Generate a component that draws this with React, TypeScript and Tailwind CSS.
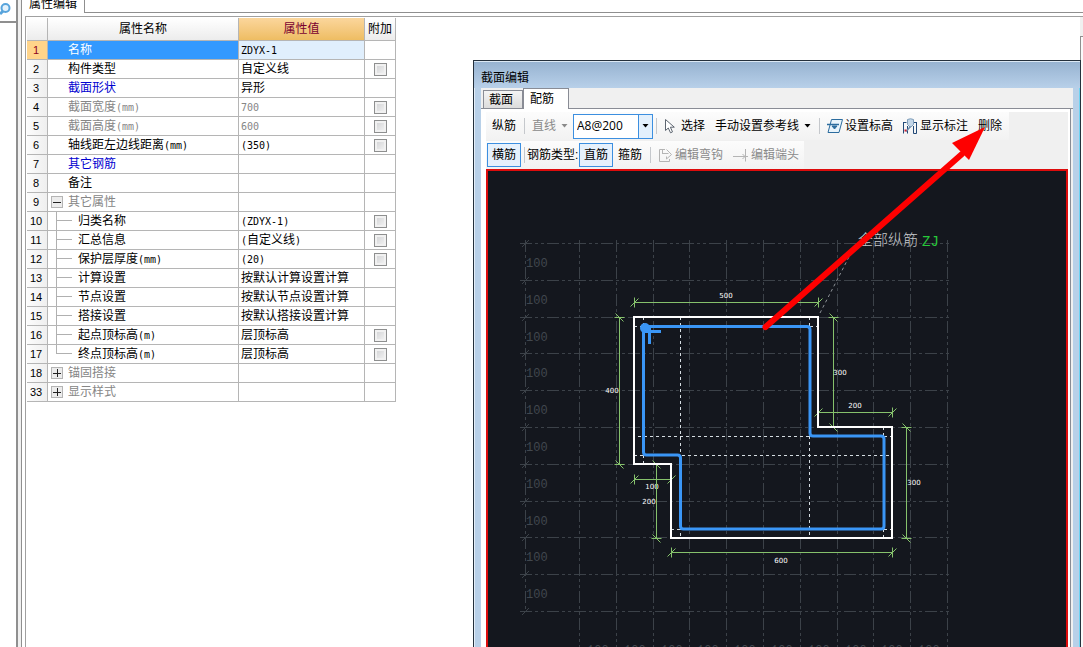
import React from 'react';

type Tone = 'normal' | 'link' | 'muted';

interface PropertyRow {
    no: number;
    name: string;
    value?: string;
    tone?: Tone;
    valueMuted?: boolean;
    checkable?: boolean;
    kind?: 'group-open' | 'group-closed' | 'child' | 'last-child';
}

const rows: PropertyRow[] = [
    { no: 1, name: '名称', value: 'ZDYX-1' },
    { no: 2, name: '构件类型', value: '自定义线', checkable: true },
    { no: 3, name: '截面形状', value: '异形', tone: 'link' },
    { no: 4, name: '截面宽度(mm)', value: '700', tone: 'muted', valueMuted: true, checkable: true },
    { no: 5, name: '截面高度(mm)', value: '600', tone: 'muted', valueMuted: true, checkable: true },
    { no: 6, name: '轴线距左边线距离(mm)', value: '(350)', checkable: true },
    { no: 7, name: '其它钢筋', tone: 'link' },
    { no: 8, name: '备注' },
    { no: 9, name: '其它属性', tone: 'muted', kind: 'group-open' },
    { no: 10, name: '归类名称', value: '(ZDYX-1)', checkable: true, kind: 'child' },
    { no: 11, name: '汇总信息', value: '(自定义线)', checkable: true, kind: 'child' },
    { no: 12, name: '保护层厚度(mm)', value: '(20)', checkable: true, kind: 'child' },
    { no: 13, name: '计算设置', value: '按默认计算设置计算', kind: 'child' },
    { no: 14, name: '节点设置', value: '按默认节点设置计算', kind: 'child' },
    { no: 15, name: '搭接设置', value: '按默认搭接设置计算', kind: 'child' },
    { no: 16, name: '起点顶标高(m)', value: '层顶标高', checkable: true, kind: 'child' },
    { no: 17, name: '终点顶标高(m)', value: '层顶标高', checkable: true, kind: 'last-child' },
    { no: 18, name: '锚固搭接', tone: 'muted', kind: 'group-closed' },
    { no: 33, name: '显示样式', tone: 'muted', kind: 'group-closed' },
];

const toneClass: Record<Tone, string> = {
    normal: 'text-black',
    link: 'text-[#0000d0]',
    muted: 'text-[#868686]',
};

// Latin runs use a narrow monospace face, Chinese runs keep the page font
const Mixed: React.FC<{ text: string }> = ({ text }) => (
    <span className="whitespace-nowrap">
        {text.split(/([\x20-\x7e]+)/).map((part, i) =>
            i % 2 ? <span key={i} className="font-['DejaVu_Sans_Mono',monospace] text-[10px]">{part}</span> : part
        )}
    </span>
);

const TreeMark: React.FC<{ row: PropertyRow }> = ({ row }) => {
    if (row.kind === 'group-open' || row.kind === 'group-closed') {
        return (
            <button aria-label={row.name} className="ml-[3px] mr-[5px] flex size-3 items-center justify-center border border-[#b4b4b4] bg-[#ececec]">
                <svg width="8" height="8" shapeRendering="crispEdges" stroke="#222">
                    <path d={row.kind === 'group-open' ? 'M0 4.5h8' : 'M0 4.5h8M4.5 0v8'} fill="none" />
                </svg>
            </button>
        );
    }
    if (row.kind) {
        return (
            <span className="ml-2 mr-1.5 flex h-[18px] w-4 flex-col">
                <span className="h-[9px] border-b border-l border-[#b0b0b0]" />
                <span className={row.kind === 'child' ? 'h-[9px] border-l border-[#b0b0b0]' : 'h-[9px]'} />
            </span>
        );
    }
    return <span className="w-5" />;
};

const PropertyTable: React.FC = () => (
    <table className="table-fixed border-separate border-spacing-0 text-xs leading-[18px]">
        <colgroup>
            <col className="w-[21px]" />
            <col className="w-[191px]" />
            <col className="w-[126px]" />
            <col className="w-[31px]" />
        </colgroup>
        <thead>
            <tr className="h-[23px]">
                <th className="border-b border-r border-[#b5b5b5] bg-linear-to-b from-white to-[#ececec] p-0"></th>
                <th className="border-b border-r border-[#b5b5b5] bg-linear-to-b from-white to-[#ececec] p-0 font-normal">属性名称</th>
                <th className="border-b border-r border-[#b5b5b5] bg-linear-to-b from-[#fbd69c] to-[#eebd62] p-0 font-normal text-[#7a0030]">属性值</th>
                <th className="border-b border-r border-[#b5b5b5] bg-linear-to-b from-white to-[#ececec] p-0 font-normal">附加</th>
            </tr>
        </thead>
        <tbody>
            {rows.map((row) => {
                const selected = row.no === 1;
                return (
                    <tr key={row.no} className="h-[19px]">
                        <th className={`border-b border-r border-[#b5b5b5] p-0 pr-[2px] font-['Liberation_Sans',sans-serif] text-[11px] font-normal ${selected ? 'bg-[#ffd48a] text-[#8b0020]' : 'bg-linear-to-r from-[#fcfcfc] to-[#efefef]'}`}>
                            {row.no}
                        </th>
                        <td className={`border-b border-r border-[#b5b5b5] p-0 ${selected ? 'bg-[#3399ff] text-white' : toneClass[row.tone ?? 'normal']}`}>
                            <div className="flex h-[18px] items-center">
                                <TreeMark row={row} />
                                <Mixed text={row.name} />
                            </div>
                        </td>
                        <td className={`border-b border-r border-[#b5b5b5] p-0 pl-[2px] ${selected ? 'bg-[#e0effd]' : ''} ${row.valueMuted ? 'text-[#868686]' : ''}`}>
                            <div className="flex h-[18px] items-center">
                                <Mixed text={row.value ?? ''} />
                            </div>
                        </td>
                        <td className="border-b border-r border-[#b5b5b5] p-0">
                            <div className="flex h-[18px] items-center justify-center">
                                {row.checkable && (
                                    <input
                                        type="checkbox"
                                        aria-label={`附加 ${row.name}`}
                                        className="size-[13px] appearance-none border border-[#8e8f8f] bg-linear-to-br from-[#cfd0d2] to-[#f6f6f6] ring-2 ring-inset ring-[#f1f1f1]"
                                    />
                                )}
                            </div>
                        </td>
                    </tr>
                );
            })}
        </tbody>
    </table>
);

const Separator: React.FC = () => <span className="ml-[3px] mr-[2px] h-4 w-px shrink-0 bg-[#c5c8cc]" />;

const Caret: React.FC<{ className?: string }> = ({ className }) => (
    <svg width="7" height="4" className={className} fill="currentColor">
        <path d="M.5 0h6L3.5 3.5z" />
    </svg>
);

interface ToolButtonProps {
    label: string;
    icon?: React.ReactNode;
    active?: boolean;
    disabled?: boolean;
    caret?: boolean;
}

const ToolButton: React.FC<ToolButtonProps> = ({ label, icon, active, disabled, caret }) => (
    <button
        disabled={disabled}
        className={`flex h-6 shrink-0 items-center gap-0.5 border px-1 ${active ? 'border-[#3c8fe0] bg-[#e6f1fc]' : 'border-transparent'} ${disabled ? 'text-[#8a8a8a]' : 'text-black'}`}
    >
        {icon}
        <span>{label}</span>
        {caret && <Caret className="ml-[3px]" />}
    </button>
);

const CursorIcon = () => (
    <svg width="15" height="16" viewBox="0 0 15 16" fill="#fff" stroke="#5d6570">
        <path d="M1.500 1.500v11l2.800-2.500 2.200 4.800 2-.9-2.100-4.700h3.900z" />
    </svg>
);

const LevelIcon = () => (
    <svg width="16" height="16" viewBox="0 0 16 16" fill="none" stroke="#2c6c9e">
        <path d="M4.5 1.5h11l-3.5 13h-11l3.5-13z" fill="#e9f4fb" />
        <path d="M0 6.5h12" strokeWidth="1.5" />
        <path d="M5 8h5l-2.5 3z" fill="#2c6c9e" />
    </svg>
);

const DimensionIcon = () => (
    <svg width="15" height="16" viewBox="0 0 15 16" fill="none" stroke="#234a78">
        <path d="M.5 4v11.5M4.5 8v7.5M10.5 8v7.5M13.5 4v11.5M.5 4.5h3M11 4.5h3M10.5 15.5h3" />
        <path d="M4.5 1.5q3-1.5 6 0v5l-2.5 2.5h-1L4.5 6.5z" fill="#c3d6e8" stroke="#7f9db9" />
        <path d="M7.5 8.5L3 13.5" stroke="#6c8cab" strokeWidth="1.5" />
        <path d="M1.5 11.5h2v2h-2z" fill="#d02030" stroke="none" />
    </svg>
);

const HookIcon = () => (
    <svg width="15" height="15" viewBox="0 0 15 15" fill="none" stroke="#b4b4b4">
        <path d="M7 1.5H1.5v12h10V11M4.5 1.5v3.5M4 5.5h6.5" />
        <path d="M8.5 1.5l5 5-5 4.5v-2.5" />
    </svg>
);

const EndIcon = () => (
    <svg width="16" height="15" viewBox="0 0 16 15" fill="none" stroke="#b4b4b4">
        <path d="M0 8.5h15M12.5 1v12.5" />
        <path d="M9.5 6l2.5 2.5L9.5 11" />
    </svg>
);

const Toolbars: React.FC = () => (
    <div className="flex flex-col gap-px bg-[#f0f0f0] text-xs leading-[18px]">
        <div className="flex h-7 w-fit items-center bg-linear-to-b from-[#fcfcfc] to-[#f2f2f2] pl-px pr-[2px]">
            <ToolButton label="纵筋" />
            <Separator />
            <ToolButton label="直线" disabled caret />
            <div className="relative h-[25px] w-20 shrink-0 border border-[#3c8fe0] bg-white">
                <select aria-label="钢筋规格" className="h-full w-full appearance-none pl-[3px] font-['Open_Sans',sans-serif] text-xs">
                    <option>A8@200</option>
                </select>
                <span className="pointer-events-none absolute inset-y-0 right-0 flex w-[14px] items-center justify-center border-l border-[#3c8fe0] bg-[#e3f0fc]">
                    <Caret />
                </span>
            </div>
            <Separator />
            <ToolButton label="选择" icon={<CursorIcon />} />
            <ToolButton label="手动设置参考线" caret />
            <Separator />
            <ToolButton label="设置标高" icon={<LevelIcon />} />
            <ToolButton label="显示标注" icon={<DimensionIcon />} />
            <ToolButton label="删除" />
        </div>
        <div className="flex h-7 w-fit items-center bg-linear-to-b from-[#fcfcfc] to-[#f2f2f2] pl-px">
            <ToolButton label="横筋" active />
            <Separator />
            <span className="w-[52px] shrink-0 whitespace-nowrap">钢筋类型:</span>
            <ToolButton label="直筋" active />
            <ToolButton label="箍筋" />
            <Separator />
            <ToolButton label="编辑弯钩" icon={<HookIcon />} disabled />
            <ToolButton label="编辑端头" icon={<EndIcon />} disabled />
        </div>
    </div>
);

interface Dimension {
    from: [number, number];
    to: [number, number];
    label: string;
    at: [number, number];
}

const dimensions: Dimension[] = [
    { from: [146, 131], to: [330, 131], label: '500', at: [238, 127] },
    { from: [131, 146], to: [131, 293], label: '400', at: [124, 222] },
    { from: [345, 146], to: [345, 256], label: '300', at: [352, 204] },
    { from: [330, 241], to: [404, 241], label: '200', at: [367, 237] },
    { from: [418, 256], to: [418, 367], label: '300', at: [426, 314] },
    { from: [146, 308], to: [183, 308], label: '100', at: [164, 318] },
    { from: [168, 293], to: [168, 367], label: '200', at: [161, 333] },
    { from: [183, 381], to: [404, 381], label: '600', at: [293, 392] },
];

const gridSteps = Array.from({ length: 11 }, (_, i) => Math.round(i * 36.8));

const DimensionLine: React.FC<{ dim: Dimension }> = ({ dim }) => {
    const [x1, y1] = dim.from;
    const [x2, y2] = dim.to;
    const horizontal = y1 === y2;
    return (
        <g>
            <g stroke="#86c26c" fill="none" transform="translate(.5 .5)">
                <path d={`M${x1} ${y1}L${x2} ${y2}`} />
                {[dim.from, dim.to].map(([x, y]) => (
                    <path
                        key={`${x}-${y}`}
                        d={horizontal ? `M${x} ${y - 5}v10M${x - 4} ${y + 4}l8 -8` : `M${x - 5} ${y}h10M${x - 4} ${y - 4}l8 8`}
                    />
                ))}
            </g>
            <text x={dim.at[0]} y={dim.at[1]} textAnchor="middle" fill="#fff" className="font-['DejaVu_Sans',sans-serif] text-[7px]">
                {dim.label}
            </text>
        </g>
    );
};

const SectionCanvas: React.FC = () => (
    <svg className="block h-full w-full" role="img" aria-label="截面配筋图">
        {/* reference grid */}
        <g stroke="#3c4249" fill="none" strokeDasharray="12 3 3 3 3 3" shapeRendering="crispEdges">
            {gridSteps.map((s) => (
                <React.Fragment key={s}>
                    <path d={`M32 ${72.5 + s}H464`} />
                    <path d={`M${91.5 + s} 69V480`} />
                </React.Fragment>
            ))}
            <path d="M37.5 69V440" />
        </g>
        <g stroke="#3c4249">
            {gridSteps.map((s) => <path key={s} d={`M34 ${76 + s}l7 -7`} />)}
        </g>
        <g fill="#41474e" className="font-['Liberation_Mono',monospace] text-xs">
            {gridSteps.slice(0, 10).map((s) => (
                <React.Fragment key={s}>
                    <text x="38" y={96 + s}>100</text>
                    <text x={99 + s} y="483">100</text>
                </React.Fragment>
            ))}
        </g>

        {/* cover guides */}
        <path
            d="M192.5 146V367M150 265.5H404M146 284.5H404M321.5 265V367M155.5 146v9M146 155.5h9M321.5 146v9M322 155.5h8M395.5 256v9M396 265.5h8M395.5 358v9M396 358.5h8M183 358.5h9M155.5 284v9"
            stroke="#d5dde2"
            strokeDasharray="3 3"
            fill="none"
            shapeRendering="crispEdges"
        />
        <path d="M332 142L362 84" stroke="#8c9196" strokeDasharray="3 3" />

        {dimensions.map((dim) => <DimensionLine key={`${dim.label}-${dim.at}`} dim={dim} />)}

        <path d="M146 146H330V256H404V367H183V293H146Z" fill="none" stroke="#fff" strokeWidth="2" />
        <path
            d="M155.5 155.5H319q3 0 3 3V262q0 3 3 3H393q3 0 3 3V355q0 3-3 3H195.5q-3 0-3-3V287q0-3-3-3H158.5q-3 0-3-3Z"
            fill="none"
            stroke="#3a96f6"
            strokeWidth="3"
        />
        <circle cx="157" cy="157" r="5" fill="#3a96f6" />
        <path d="M155 160.5H173M161.5 157V173" stroke="#3a96f6" strokeWidth="3" />

        <text x="370" y="74" fill="#c8cbce" className="text-[15px] font-light">全部纵筋</text>
        <text x="434" y="75" fill="#27c93a" className="font-['Liberation_Mono',monospace] text-sm">ZJ</text>
    </svg>
);

const SectionWindow: React.FC = () => (
    <section className="absolute bottom-0 left-[473px] right-[2px] top-[60px] flex flex-col border-x border-t border-[#24303c] bg-[#b8d0e8]">
        <h2 className="h-[27px] shrink-0 border-t border-[#dce9f5] bg-linear-to-b from-[#97b3d1] to-[#b8d0e9] pl-[7px] pt-[7px] text-xs leading-[18px]">截面编辑</h2>
        <div className="flex min-h-0 flex-1 border-l border-r border-l-[#e4eef8] border-r-[#6fd3f2] pl-[6px] pr-[6px]">
            <div className="flex min-w-0 flex-1 flex-col bg-[#f0f0f0]">
                <div role="tablist" className="flex h-[21px] shrink-0 items-end border-b border-[#898c95] pl-[2px] text-xs">
                    <button role="tab" aria-selected="false" className="h-[18px] w-10 border border-b-0 border-[#898c95] bg-linear-to-b from-[#f4f4f4] to-[#dcdcdc] pr-1 leading-4">截面</button>
                    <button role="tab" aria-selected="true" className="-mb-px h-[21px] w-[46px] border border-b-0 border-[#898c95] bg-white pr-2 leading-4">配筋</button>
                </div>
                <div className="mr-[2px] flex min-h-0 flex-1 flex-col border-r border-[#898c95] bg-white pl-[5px] pr-[2px] pt-[3px]">
                    <Toolbars />
                    <div className="min-h-0 flex-1 border-2 border-b-0 border-[#dd0c0c] bg-[#14171e]">
                        <SectionCanvas />
                    </div>
                </div>
            </div>
        </div>
        {/* pointer to the delete button */}
        <svg className="pointer-events-none absolute left-[280px] top-[60px]" width="240" height="214">
            <path d="M11.5 206L208 33" stroke="#fe0000" strokeWidth="6" strokeLinecap="round" />
            <path d="M231 6L198 22L215 39Z" fill="#fe0000" />
        </svg>
    </section>
);

export default function App() {
    return (
        <div className="relative flex h-screen overflow-hidden bg-white font-['Liberation_Sans','Noto_Sans_CJK_SC',sans-serif] text-black">
            <aside className="w-[18px] shrink-0 border-r-2 border-[#8f8f8f]">
                <button aria-label="搜索" className="block h-[23px] w-full border-b-2 border-[#8f8f8f]">
                    <svg width="12" height="22" fill="none" stroke="#58a4dc">
                        <circle cx="5.5" cy="8" r="4" strokeWidth="2" fill="#e4f2fc" />
                        <path d="M3 11L0 14" strokeWidth="3" />
                    </svg>
                </button>
            </aside>
            <div className="w-1 shrink-0 border-r border-[#8f8f8f] bg-[#f0f0f0]" />
            <main className="flex min-w-0 flex-1 flex-col">
                <div className="flex h-[13px] shrink-0">
                    <h1 className="w-[62px] shrink-0 pl-[7px] text-xs leading-[9px]">属性编辑</h1>
                    <div className="flex-1 border-b border-l border-[#8f8f8f]" />
                </div>
                <div className="ml-[3px] mt-[3px] flex min-h-0 flex-1 border-l border-t border-[#a0a0a0]">
                    <div className="min-w-0 flex-1 pl-px pt-px">
                        <PropertyTable />
                    </div>
                    <div className="flex w-[3px] flex-col bg-[#f0f0f0] pt-[19px]">
                        <div className="flex-1 border-l border-t border-[#8f8f8f] bg-[#fafafa]" />
                    </div>
                </div>
            </main>
            <SectionWindow />
        </div>
    );
}
